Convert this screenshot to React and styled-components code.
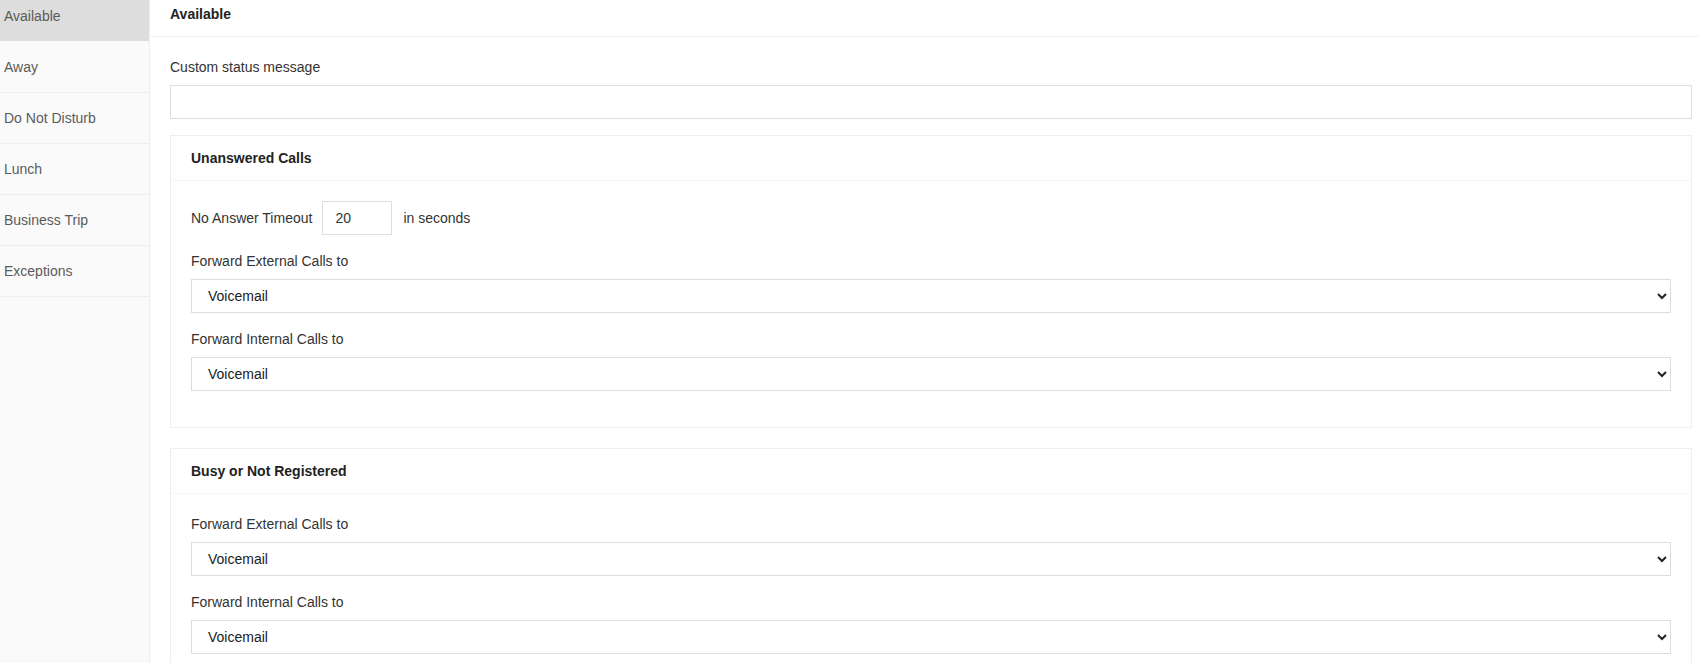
import { useState } from "react";
import styled, { createGlobalStyle } from "styled-components";

const GlobalStyle = createGlobalStyle`
  html, body {
    margin: 0;
    padding: 0;
    background: #fff;
    font-family: "Liberation Sans", Arial, sans-serif;
    font-size: 14px;
    color: #333;
  }
  * {
    box-sizing: border-box;
  }
`;

const Page = styled.div`
  display: flex;
  height: 663px;
  overflow: hidden;
`;

// the view is scrolled down by a few pixels in the screenshot
const Scrolled = styled.div`
  display: flex;
  flex: 1;
  margin-top: -9px;
`;

const Sidebar = styled.div`
  width: 150px;
  flex-shrink: 0;
  background-color: #fafafa;
  border-right: 1px solid #eee;
  min-height: 700px;
`;

const NavItem = styled.div`
  height: 51px;
  display: flex;
  align-items: center;
  padding-left: 4px;
  color: #5a5a5a;
  border-bottom: 1px solid #eee;
  background-color: ${(props) => (props.$active ? "#ddd" : "transparent")};
  border-bottom-color: ${(props) => (props.$active ? "#fafafa" : "#eee")};
  cursor: pointer;
`;

const Main = styled.div`
  flex: 1;
  min-width: 0;
  background-color: #fff;
`;

const Header = styled.div`
  height: 46px;
  display: flex;
  align-items: center;
  padding: 0 20px;
  font-weight: bold;
  color: #222;
  border-bottom: 1px solid #f2f2f2;
`;

const Content = styled.div`
  padding: 20px 7px 0 20px;
`;

const Field = styled.div`
  margin-bottom: 16px;
`;

const Label = styled.div`
  line-height: 20px;
  margin-bottom: 8px;
`;

const TextInput = styled.input`
  display: block;
  width: ${(props) => props.$width || "100%"};
  height: 34px;
  border: 1px solid #ddd;
  border-radius: 0;
  padding: 0 12px;
  font-family: inherit;
  font-size: 14px;
  color: #333;
  outline: none;
`;

const Card = styled.div`
  border: 1px solid #eee;
  margin-bottom: 20px;
`;

const CardHeader = styled.div`
  height: 45px;
  display: flex;
  align-items: center;
  padding: 0 20px;
  font-weight: bold;
  color: #222;
  border-bottom: 1px solid #f5f5f5;
`;

const CardBody = styled.div`
  padding: 20px 20px 20px 20px;
`;

const InlineRow = styled.div`
  display: flex;
  align-items: center;
  gap: 10px;
  margin-bottom: 16px;

  & > span:last-child {
    margin-left: 1px;
  }
`;

const Select = styled.select`
  display: block;
  width: 100%;
  height: 34px;
  border: 1px solid #ddd;
  border-radius: 0;
  padding: 0 12px;
  background-color: #fff;
  font-family: inherit;
  font-size: 14px;
  color: #222;
  outline: none;
`;

const statuses = [
  "Available",
  "Away",
  "Do Not Disturb",
  "Lunch",
  "Business Trip",
  "Exceptions",
];

const options = ["Voicemail", "Extension", "Mobile", "Hang up"];

function ForwardSelect({ label }) {
  const [value, setValue] = useState("Voicemail");
  return (
    <Field>
      <Label>{label}</Label>
      <Select value={value} onChange={(e) => setValue(e.target.value)}>
        {options.map((o) => (
          <option key={o} value={o}>
            {o}
          </option>
        ))}
      </Select>
    </Field>
  );
}

function App() {
  const [active, setActive] = useState("Available");
  const [timeout, setTimeoutValue] = useState("20");

  return (
    <>
      <GlobalStyle />
      <Page>
        <Scrolled>
          <Sidebar>
            {statuses.map((s) => (
              <NavItem key={s} $active={s === active} onClick={() => setActive(s)}>
                {s}
              </NavItem>
            ))}
          </Sidebar>
          <Main>
            <Header>{active}</Header>
            <Content>
              <Field>
                <Label>Custom status message</Label>
                <TextInput type="text" />
              </Field>

              <Card>
                <CardHeader>Unanswered Calls</CardHeader>
                <CardBody>
                  <InlineRow>
                    <span>No Answer Timeout</span>
                    <TextInput
                      $width="70px"
                      value={timeout}
                      onChange={(e) => setTimeoutValue(e.target.value)}
                    />
                    <span>in seconds</span>
                  </InlineRow>
                  <ForwardSelect label="Forward External Calls to" />
                  <ForwardSelect label="Forward Internal Calls to" />
                </CardBody>
              </Card>

              <Card>
                <CardHeader>Busy or Not Registered</CardHeader>
                <CardBody>
                  <ForwardSelect label="Forward External Calls to" />
                  <ForwardSelect label="Forward Internal Calls to" />
                </CardBody>
              </Card>
            </Content>
          </Main>
        </Scrolled>
      </Page>
    </>
  );
}

export default App;
